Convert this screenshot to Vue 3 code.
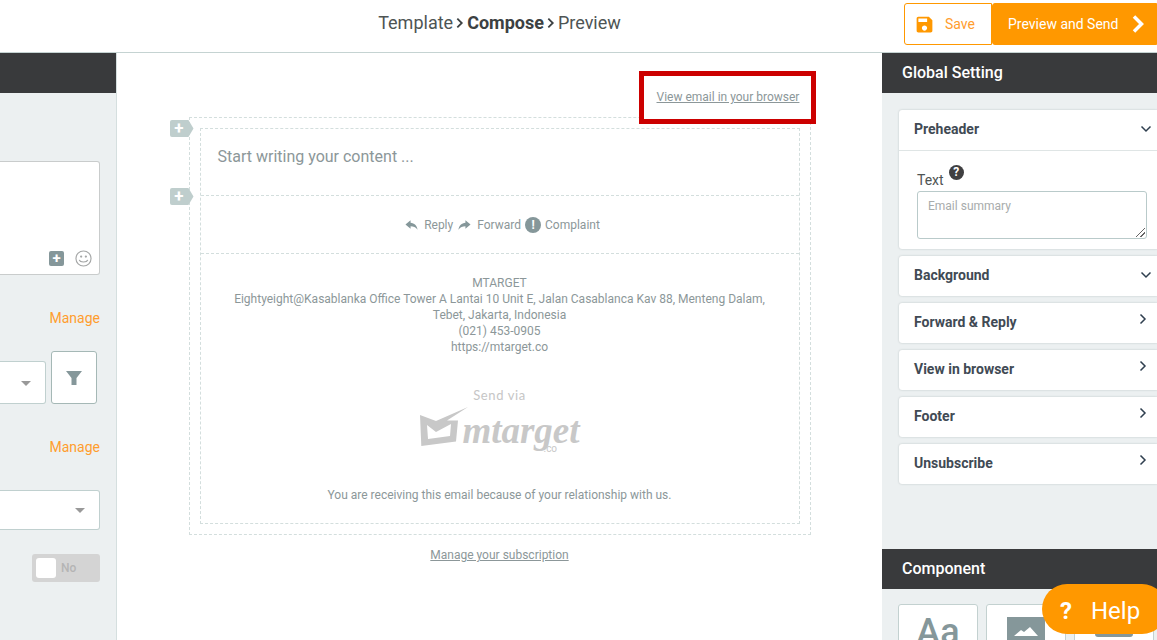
<template>
  <div class="page">
    <header class="topbar">
      <div></div>
      <nav class="steps">
        <span>Template</span>
        <svg class="step-arrow" viewBox="0 0 9 14"><path d="M1.500 2l5 5-5 5" /></svg>
        <b>Compose</b>
        <svg class="step-arrow" viewBox="0 0 9 14"><path d="M1.500 2l5 5-5 5" /></svg>
        <span>Preview</span>
      </nav>
      <div class="actions">
        <button class="btn-save">
          <svg viewBox="0 0 24 24"><path d="M17 3H5c-1.110 0-2 .9-2 2v14c0 1.100.89 2 2 2h14c1.100 0 2-.9 2-2V7l-4-4zm-5 16c-1.660 0-3-1.340-3-3s1.340-3 3-3 3 1.340 3 3-1.340 3-3 3zm3-10H5V5h10v4z" /></svg>
          <span>Save</span>
        </button>
        <button class="btn-send">
          <span>Preview and Send</span>
          <svg viewBox="0 0 14 20"><path d="M3 2.500l7.500 7.500L3 17.500" /></svg>
        </button>
      </div>
    </header>

    <div class="workspace">
      <aside class="left">
        <div class="panel-head"></div>
        <div class="left-body">
          <div class="message">
            <span class="msg-plus">+</span>
            <svg class="smile" viewBox="0 0 18 18">
              <circle cx="9" cy="9" r="8" />
              <circle class="dot" cx="6.500" cy="7" r="1.200" />
              <circle class="dot" cx="11.500" cy="7" r="1.200" />
              <path d="M4.500 10.500c1 3 8 3 9 0" />
            </svg>
          </div>
          <a class="manage first">Manage</a>
          <div class="filter-row">
            <div class="select short"><i class="caret"></i></div>
            <div class="filter-btn">
              <svg viewBox="0 0 16 16"><path d="M0 1h16l-5.500 7v7h-5V8z" /></svg>
            </div>
          </div>
          <a class="manage second">Manage</a>
          <div class="select wide"><i class="caret"></i></div>
          <div class="toggle"><span class="knob"></span><span>No</span></div>
        </div>
      </aside>

      <main class="canvas">
        <div class="view-row">
          <div class="view-mark"><a>View email in your browser</a></div>
        </div>
        <div class="mail-outer">
          <span class="add-tab first-tab">+</span>
          <span class="add-tab second-tab">+</span>
          <div class="mail-inner">
            <section class="mail-start">Start writing your content ...</section>
            <section class="mail-links">
              <svg viewBox="0 0 14 12"><path d="M6 1L.5 5.500 6 10V7.300c3 0 5.500.8 7.500 3.700C13 7 10 3.800 6 3.600z" /></svg>
              <span>Reply</span>
              <svg viewBox="0 0 14 12"><path d="M8 1l5.500 4.500L8 10V7.300c-3 0-5.500.8-7.500 3.700C1 7 4 3.800 8 3.600z" /></svg>
              <span>Forward</span>
              <span class="warn">!</span>
              <span>Complaint</span>
            </section>
            <section class="mail-footer">
              <p>MTARGET</p>
              <p>Eightyeight@Kasablanka Office Tower A Lantai 10 Unit E, Jalan Casablanca Kav 88, Menteng Dalam,</p>
              <p>Tebet, Jakarta, Indonesia</p>
              <p>(021) 453-0905</p>
              <p>https://mtarget.co</p>
              <div class="send-via">Send via</div>
              <div class="logo">
                <svg viewBox="0 0 49 40">
                  <path class="logo-fill" d="M1 8L2.300 39 37 34.500 39 13.500H28L49 0 17 14zM8 18l1 14 22-3 1-12-15 8z" />
                </svg>
                <span class="logo-word">mtarget</span>
                <span class="logo-co">.co</span>
              </div>
              <p class="relation">You are receiving this email because of your relationship with us.</p>
            </section>
          </div>
        </div>
        <a class="manage-sub">Manage your subscription</a>
      </main>

      <aside class="right">
        <div class="panel-head">Global Setting</div>
        <div class="settings">
          <div v-for="item in settings" :key="item.name" class="card">
            <div class="card-head">
              <span>{{ item.name }}</span>
              <svg v-if="item.open" class="chev down" viewBox="0 0 12 8"><path d="M1.500 1.500L6 6l4.500-4.500" /></svg>
              <svg v-else class="chev side" viewBox="0 0 8 12"><path d="M1.500 1.500L6 6l-4.500 4.500" /></svg>
            </div>
            <div v-if="item.body" class="card-body">
              <div class="text-label">
                <span>Text</span>
                <i class="hint">?</i>
              </div>
              <div class="summary">Email summary<span class="grip"></span></div>
            </div>
          </div>
        </div>
        <div class="panel-head">Component</div>
        <div class="tiles">
          <div class="tile"><span class="aa">Aa</span></div>
          <div class="tile">
            <svg class="tile-img" viewBox="0 0 38 30">
              <path d="M0 0h38v30H0z" />
              <path class="tile-cut" d="M7 19l7-6 3 2 6-5 8 9z" />
            </svg>
          </div>
          <div class="tile"><span class="tile-btn"></span></div>
        </div>
      </aside>
    </div>

    <button class="help"><b>?</b><span>Help</span></button>
  </div>
</template>

<script setup>
const settings = [
  { name: "Preheader", open: true, body: true },
  { name: "Background", open: true },
  { name: "Forward & Reply" },
  { name: "View in browser" },
  { name: "Footer" },
  { name: "Unsubscribe" },
];
</script>

<style>
html,
body {
  margin: 0;
  background: #fff;
}
</style>

<style scoped>
.page {
  position: relative;
  width: 1157px;
  height: 640px;
  overflow: hidden;
  font-family: Roboto, "Liberation Sans", sans-serif;
  color: #3d4650;
}
.topbar,
.workspace {
  display: grid;
  grid-template-columns: 117px 765px 275px;
}
.topbar {
  height: 52px;
  box-sizing: content-box;
  border-bottom: 1px solid #c5d3d2;
}
.steps {
  display: flex;
  align-items: center;
  justify-content: center;
  gap: 3px;
  font-size: 18px;
  color: #4e5454;
  padding-bottom: 7px;
}
.steps b {
  font-weight: 700;
  color: #3c4142;
}
.step-arrow {
  width: 8px;
  height: 14px;
  fill: none;
  stroke: #3c4142;
  stroke-width: 2;
}
.actions {
  display: flex;
  padding: 3px 0 0 22px;
  height: 42px;
}
.actions button {
  display: flex;
  align-items: center;
  height: 42px;
  font: 14px Roboto, sans-serif;
  border: 1px solid #ff9800;
  box-sizing: border-box;
}
.btn-save {
  width: 88px;
  padding: 0 0 0 9px;
  gap: 10px;
  background: #fff;
  color: #ff9d2e;
  border-radius: 3px 0 0 3px;
}
.btn-save svg {
  width: 21px;
  height: 21px;
  fill: #ff9800;
}
.btn-send {
  width: 165px;
  padding: 0 0 0 15px;
  gap: 13px;
  background: #ff9800;
  color: #fff;
  border-radius: 3px 0 0 3px;
}
.btn-send svg {
  width: 14px;
  height: 20px;
  fill: none;
  stroke: #fff;
  stroke-width: 3.500;
}
.workspace {
  height: 587px;
}
.panel-head {
  height: 40px;
  line-height: 40px;
  background: #393a3c;
  color: #fff;
  font-size: 16px;
  font-weight: 500;
  padding-left: 20px;
}
.left {
  background: #ecf0f1;
  border-right: 1px solid #d5dfdf;
}
.left-body {
  position: relative;
  display: flex;
  flex-direction: column;
  align-items: flex-end;
  padding: 68px 16px 0 0;
}
.message {
  position: relative;
  width: 100px;
  height: 114px;
  box-sizing: border-box;
  background: #fff;
  border: 1px solid #c9cccc;
  border-left: 0;
  border-radius: 0 3px 3px 0;
}
.msg-plus {
  position: absolute;
  left: 49px;
  top: 89px;
  width: 15px;
  height: 15px;
  line-height: 15px;
  border-radius: 2px;
  background: #85979a;
  color: #fff;
  text-align: center;
  font-size: 15px;
  font-weight: 700;
}
.smile {
  position: absolute;
  left: 75px;
  top: 88px;
  width: 17px;
  height: 17px;
  fill: none;
  stroke: #a4a6a6;
  stroke-width: 1.200;
}
.smile .dot {
  fill: #a4a6a6;
  stroke: none;
}
.manage {
  color: #ff9d2e;
  font-size: 14px;
  line-height: 16px;
}
.manage.first {
  margin-top: 35px;
}
.manage.second {
  margin-top: 35px;
}
.filter-row {
  display: flex;
  align-items: flex-end;
  gap: 5px;
  margin-top: 25px;
  margin-right: 3px;
}
.select {
  position: relative;
  box-sizing: border-box;
  background: #fff;
  border: 1px solid #c0d0cf;
  border-left: 0;
  border-radius: 0 3px 3px 0;
}
.select.short {
  width: 46px;
  height: 43px;
}
.select.wide {
  width: 100px;
  height: 40px;
  margin-top: 35px;
}
.caret {
  position: absolute;
  right: 14px;
  top: 50%;
  margin-top: -2px;
  border: 5px solid transparent;
  border-top: 5px solid #999;
  border-bottom: 0;
}
.filter-btn {
  display: flex;
  align-items: center;
  justify-content: center;
  width: 46px;
  height: 53px;
  box-sizing: border-box;
  background: #fff;
  border: 1px solid #a5b8b6;
  border-radius: 3px;
}
.filter-btn svg {
  width: 16px;
  height: 16px;
  fill: #85979a;
}
.toggle {
  display: flex;
  align-items: center;
  gap: 5px;
  width: 68px;
  height: 28px;
  margin-top: 24px;
  padding-left: 4px;
  box-sizing: border-box;
  background: #d4d4d4;
  border-radius: 3px;
  color: #b4b4b4;
  font-size: 12px;
  font-weight: 500;
}
.knob {
  width: 20px;
  height: 20px;
  background: #fff;
  border-radius: 3px;
}
.canvas {
  display: flex;
  flex-direction: column;
  align-items: center;
  background: #fff;
}
.view-row {
  display: flex;
  justify-content: flex-end;
  width: 622px;
  height: 64px;
  box-sizing: border-box;
  padding-top: 18px;
}
.view-mark {
  position: relative;
  z-index: 2;
  width: 177px;
  height: 53px;
  box-sizing: border-box;
  margin-right: -5px;
  border: 5px solid #cc0000;
  background: #fff;
  font-size: 12px;
  line-height: 16px;
  color: #8c9799;
  padding: 13px 0 0 13px;
}
.view-mark a {
  text-decoration: underline;
}
.mail-outer {
  position: relative;
  box-sizing: border-box;
  width: 622px;
  height: 418px;
  padding: 10px;
  border: 1px dashed #d3dedd;
}
.add-tab {
  position: absolute;
  left: -20px;
  width: 19px;
  height: 17px;
  padding-right: 5px;
  box-sizing: content-box;
  line-height: 16px;
  text-align: center;
  color: #fff;
  font-size: 17px;
  font-weight: 700;
  background: #bfcecd;
  border-radius: 2px 0 0 2px;
  clip-path: polygon(0 0, 79% 0, 100% 50%, 79% 100%, 0 100%);
}
.first-tab {
  top: 2px;
}
.second-tab {
  top: 70px;
}
.mail-inner {
  height: 396px;
  box-sizing: border-box;
  border: 1px dashed #d3dedd;
  color: #8c9799;
}
.mail-start {
  height: 67px;
  box-sizing: border-box;
  padding: 18px 16px 0 17px;
  font-size: 16px;
  line-height: 20px;
  border-bottom: 1px dashed #d3dedd;
}
.mail-links {
  display: flex;
  align-items: center;
  justify-content: center;
  gap: 5px;
  height: 58px;
  box-sizing: border-box;
  padding-left: 6px;
  font-size: 12px;
  border-bottom: 1px dashed #d3dedd;
}
.mail-links svg {
  width: 13px;
  height: 12px;
  fill: #85979a;
}
.mail-links svg + span {
  margin-left: 1px;
}
.warn {
  width: 16px;
  height: 16px;
  line-height: 16px;
  text-align: center;
  border-radius: 50%;
  background: #85979a;
  color: #fff;
  font-weight: 700;
  font-size: 12px;
  margin: 0 -1px;
}
.mail-footer {
  text-align: center;
  padding-top: 21px;
  font-size: 12px;
  line-height: 16px;
}
.mail-footer p {
  margin: 0;
}
.send-via {
  margin-top: 31px;
  font-family: Lato, sans-serif;
  font-size: 13px;
  letter-spacing: 0.6px;
  color: #c6c6c6;
  line-height: 18px;
}
.logo {
  position: relative;
  display: flex;
  justify-content: center;
  align-items: flex-start;
  height: 48px;
  margin: 3px 0 0;
  color: #c8c8c8;
}
.logo svg {
  width: 49px;
  height: 40px;
  flex: none;
}
.logo-fill {
  fill: #c8c8c8;
  fill-rule: evenodd;
}
.logo-word {
  font: italic 700 37px/42px "Liberation Serif", serif;
  margin: 3px 0 0 -6px;
}
.logo-co {
  position: absolute;
  left: 343px;
  top: 36px;
  font-size: 10px;
  line-height: 12px;
}
.mail-footer .relation {
  margin-top: 32px;
}
.manage-sub {
  margin-top: 12px;
  font-size: 12px;
  line-height: 16px;
  color: #8c9799;
  text-decoration: underline;
}
.right {
  background: #ecf0f1;
  overflow: hidden;
}
.settings {
  display: flex;
  flex-direction: column;
  gap: 6px;
  height: 456px;
  box-sizing: border-box;
  padding: 17px 0 0 17px;
  overflow: hidden;
}
.card {
  flex: none;
  background: #fff;
  border-radius: 3px 0 0 3px;
  box-shadow: 0 0 2px rgba(60, 80, 80, 0.3);
  margin-bottom: 1px;
}
.card-head {
  display: flex;
  align-items: center;
  justify-content: space-between;
  height: 40px;
  box-sizing: border-box;
  padding: 0 5px 2px 15px;
  font-size: 14px;
  font-weight: 700;
  color: #414a54;
}
.chev {
  fill: none;
  stroke: #2f3f4f;
  stroke-width: 1.500;
}
.chev.down {
  width: 12px;
  height: 8px;
}
.chev.side {
  width: 8px;
  height: 12px;
  margin: -6px 5px 0 0;
}
.card-body {
  border-top: 1px solid #dfe5e5;
  height: 98px;
  padding: 0 10px 0 18px;
}
.text-label {
  display: flex;
  align-items: flex-start;
  gap: 5px;
  height: 40px;
  padding-top: 21px;
  box-sizing: border-box;
  font-size: 14px;
  line-height: 16px;
  color: #4e5454;
}
.hint {
  width: 15px;
  height: 15px;
  margin-top: -7px;
  border-radius: 50%;
  background: #3f3f41;
  color: #fff;
  text-align: center;
  font: 700 12px/15px Roboto, sans-serif;
}
.summary {
  position: relative;
  width: 230px;
  height: 48px;
  box-sizing: border-box;
  padding: 6px 10px;
  font-size: 12px;
  line-height: 16px;
  color: #a8acac;
  border: 1px solid #b9caca;
  border-radius: 3px;
}
.grip {
  position: absolute;
  right: 1px;
  bottom: 1px;
  width: 9px;
  height: 9px;
  background: linear-gradient(135deg, transparent 46%, #666 46%, #666 54%, transparent 54%, transparent 70%, #666 70%, #666 78%, transparent 78%);
}
.tiles {
  display: flex;
  gap: 8px;
  padding: 15px 0 0 16px;
}
.tile {
  flex: none;
  display: flex;
  justify-content: center;
  box-sizing: border-box;
  width: 80px;
  height: 80px;
  background: #fff;
  border: 1px solid #c3d1d0;
  border-radius: 3px;
}
.aa {
  font-size: 36px;
  font-weight: 500;
  line-height: 54px;
  color: #85979a;
}
.tile-img {
  width: 38px;
  height: 30px;
  margin-top: 12px;
  fill: #85979a;
}
.tile-cut {
  fill: #fff;
}
.tile-btn {
  width: 38px;
  height: 20px;
  margin-top: 12px;
  box-sizing: border-box;
  border: 3px solid #85979a;
  border-radius: 3px;
}
.help {
  position: absolute;
  left: 1042px;
  top: 584px;
  display: flex;
  align-items: center;
  gap: 19px;
  width: 125px;
  height: 50px;
  padding: 3px 0 0 18px;
  box-sizing: border-box;
  border: 0;
  border-radius: 25px;
  background: #ff9800;
  color: #fff;
  font: 24px Roboto, sans-serif;
}
.help b {
  font-weight: 700;
}
</style>
